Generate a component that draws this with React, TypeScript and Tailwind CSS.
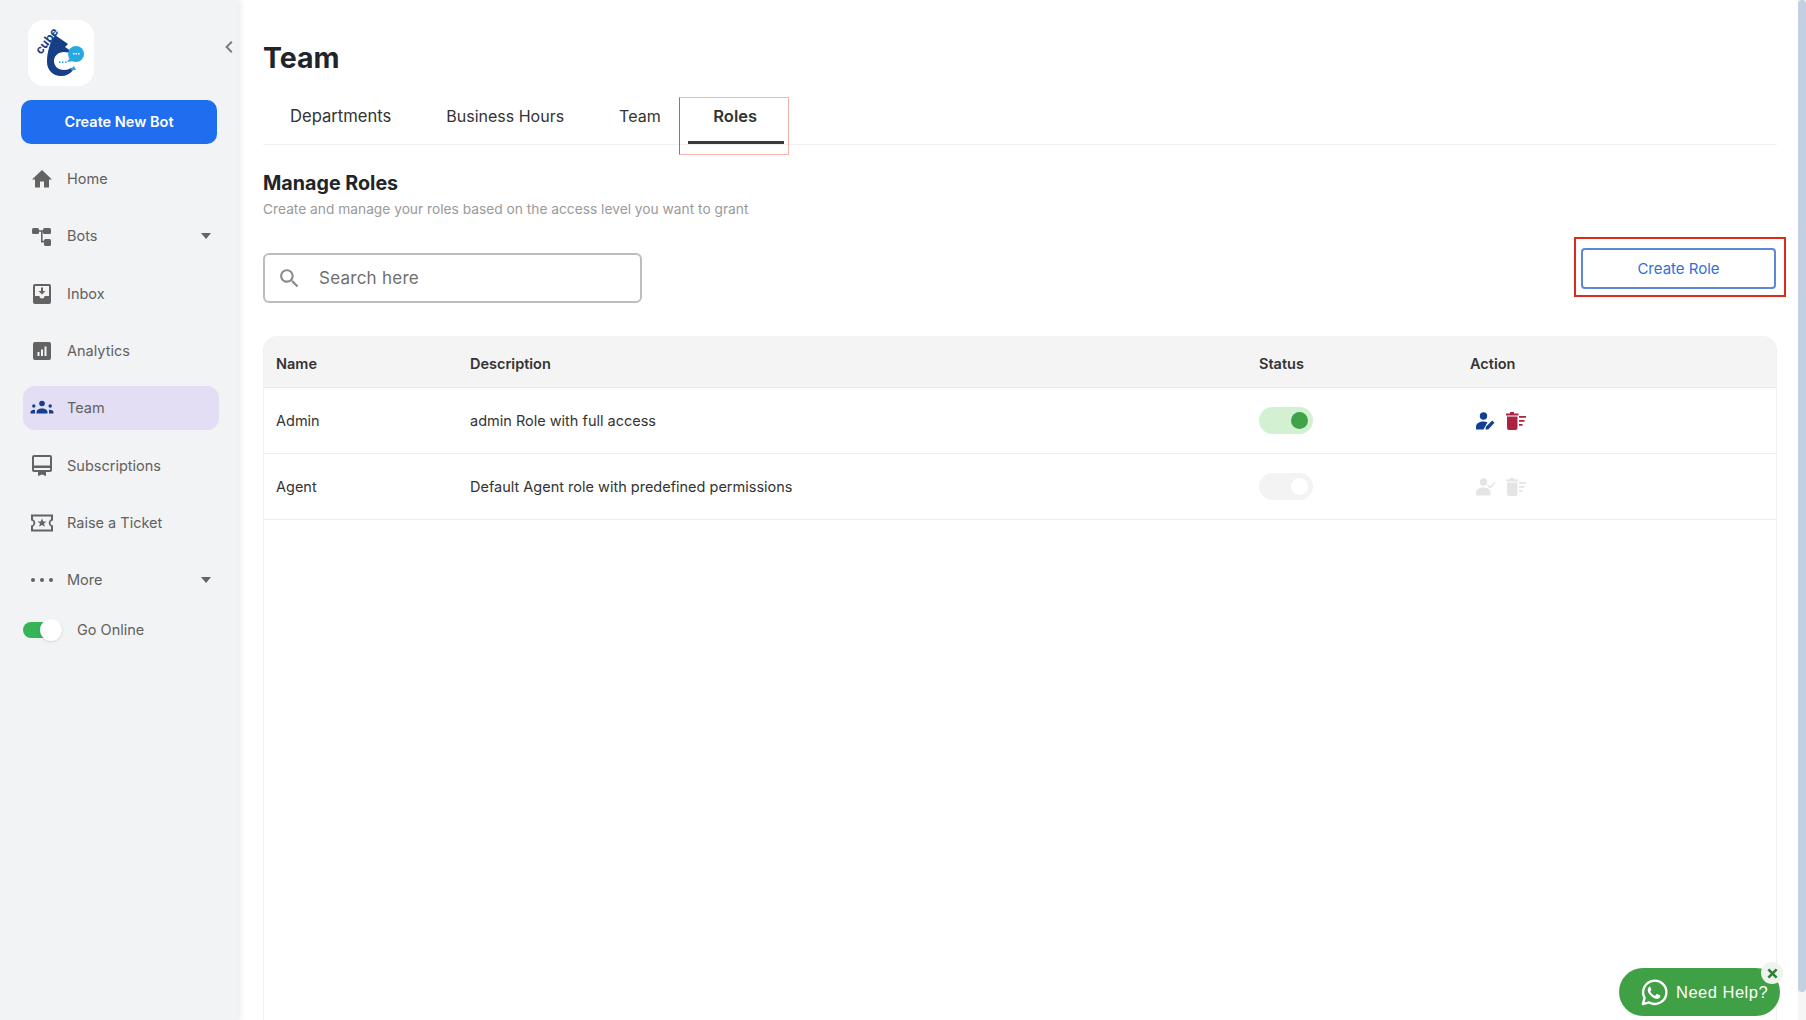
import React from 'react';

const ICON = '#636363';

const HomeIcon = () => (
  <svg viewBox="0 0 24 24" className="w-[24px] h-[24px]" fill={ICON}>
    <path d="M10 20.5v-6h4v6h5v-8h3L12 3 2 12.5h3v8z" />
  </svg>
);
const BotsIcon = () => (
  <svg viewBox="0 0 24 24" className="w-[24px] h-[24px]" fill={ICON} stroke="none">
    <rect x="2" y="4" width="7" height="6" rx="1.5" />
    <rect x="13" y="4" width="8" height="6" rx="1.5" />
    <rect x="14" y="15" width="7" height="7" rx="1.5" />
    <path d="M8 6.2h6v1.6H8zM11 7h1.6v11H11zM11 16.8h4v1.6h-4z" />
  </svg>
);
const InboxIcon = () => (
  <svg viewBox="0 0 24 24" className="w-[24px] h-[24px]">
    <path fill={ICON} d="M5 2h14a2 2 0 0 1 2 2v16a2 2 0 0 1-2 2H5a2 2 0 0 1-2-2V4a2 2 0 0 1 2-2z" />
    <path fill="#f2f3f5" d="M5 4h14v10h-4.500a2.500 2.500 0 0 1-5 0H5z" />
    <path fill={ICON} d="M11 5.500h2v3.500h2.500L12 12.500 8.500 9H11z" />
  </svg>
);
const AnalyticsIcon = () => (
  <svg viewBox="0 0 24 24" className="w-[24px] h-[24px]">
    <rect x="3" y="3" width="18" height="18" rx="2" fill={ICON} />
    <path fill="#f2f3f5" d="M7.500 13h2v4h-2zM11 10.500h2V17h-2zM14.500 7.500h2V17h-2z" />
  </svg>
);
const TeamIcon = () => (
  <svg viewBox="0 0 24 24" className="w-[24px] h-[24px]" fill="#123f8f">
    <circle cx="12" cy="7.500" r="2.800" />
    <path d="M6.500 17.500v-1.300c0-2.300 2.500-3.700 5.500-3.700s5.500 1.400 5.500 3.700v1.300z" />
    <circle cx="3.800" cy="10" r="1.700" />
    <path d="M0.500 17.500v-1c0-1.800 1.500-2.800 3.800-2.800l.7.100v3.700z" />
    <circle cx="20.200" cy="10" r="1.700" />
    <path d="M23.500 17.500v-1c0-1.800-1.500-2.800-3.800-2.800l-.7.100v3.700z" />
  </svg>
);
const SubscriptionIcon = () => (
  <svg viewBox="0 0 24 24" className="w-[24px] h-[24px]" fill={ICON}>
    <path fillRule="evenodd" d="M4 2h16a2 2 0 0 1 2 2v13a2 2 0 0 1-2 2h-4v4l-4-1.500L8 23v-4H4a2 2 0 0 1-2-2V4a2 2 0 0 1 2-2zm0 2v8.500h16V4zm0 11v2h16v-2z" />
  </svg>
);
const TicketIcon = () => (
  <svg viewBox="0 0 24 24" className="w-[24px] h-[24px]" fill={ICON}>
    <path fillRule="evenodd" d="M1 3.500h22v6a2.500 2.500 0 0 0 0 5v6H1v-6a2.500 2.500 0 0 0 0-5zm2 2v2.700a4.300 4.300 0 0 1 0 7.600v2.700h18v-2.700a4.300 4.300 0 0 1 0-7.600V5.500z" />
    <path d="M12 7.500l1.300 3h3.200l-2.500 2.100.9 3.200-2.900-1.800-2.900 1.800.9-3.200-2.500-2.100h3.200z" />
  </svg>
);
const MoreIcon = () => (
  <svg viewBox="0 0 24 24" className="w-[24px] h-[24px]" fill={ICON}>
    <circle cx="3" cy="12" r="2" />
    <circle cx="12" cy="12" r="2" />
    <circle cx="21" cy="12" r="2" />
  </svg>
);

const Caret = () => (
  <svg viewBox="0 0 10 6" className="w-[10px] h-[6px]" fill="#636363">
    <path d="M0 0h10L5 6z" />
  </svg>
);

const UserEdit = ({ color }: { color: string }) => (
  <svg viewBox="0 0 20 18" className="w-[20px] h-[18px]" fill={color}>
    <circle cx="7.500" cy="4" r="3.700" />
    <path d="M0 17.500v-3c0-3 3.500-5 7.500-5 1.500 0 2.800.2 4 .7L7.500 17.500z" />
    <path d="M9.500 17.500l.4-2.700 6.300-6.300 2.300 2.300-6.300 6.700z" />
  </svg>
);
const UserCheck = ({ color }: { color: string }) => (
  <svg viewBox="0 0 20 18" className="w-[20px] h-[18px]" fill={color}>
    <circle cx="7.500" cy="4" r="3.700" />
    <path d="M0 17.500v-3c0-3 3.500-5 7.500-5s7 2 7 5v3z" />
    <path d="M12 6.500l2 2 4.500-4.500 1 1-5.500 5.500-3-3z" />
  </svg>
);
const TrashList = ({ color }: { color: string }) => (
  <svg viewBox="0 0 20 18" className="w-[20px] h-[18px]" fill={color}>
    <path d="M4 0h4v1.500h4.500v2H0v-2h4zM1 4.500h10.500V16a2 2 0 0 1-2 2h-6.500a2 2 0 0 1-2-2z" />
    <path d="M13 4h7v1.800h-7zM13 8h5.500v1.800H13zM13 12h3.500v1.800H13z" />
  </svg>
);

const WhatsApp = () => (
  <svg viewBox="0 0 32 32" className="w-[31px] h-[31px]" fill="none">
    <path d="M4 28l1.800-6.400A12 12 0 1 1 10.500 26.300z" stroke="#fff" strokeWidth="2.400" strokeLinejoin="round" />
    <path fill="#fff" d="M12 9.500c-.5 0-1.300.3-1.900 1-.7.800-1.100 1.800-1.100 3 0 2 1.300 4 3.400 6 2.200 2 4.500 3 6.400 3 1.300 0 2.500-.8 3-1.900.3-.6.300-1.200.2-1.400-.1-.2-2.800-1.500-3.200-1.600-.4-.1-.6 0-.8.300l-1.100 1.300c-.2.200-.4.200-.7.100-1.900-.8-3.500-2.200-4.500-4-.2-.3 0-.5.100-.7l.8-1c.2-.3.200-.5.100-.8l-1.200-2.900c-.1-.3-.4-.4-.5-.4z" />
  </svg>
);

const Logo = () => (
  <svg viewBox="0 0 66 66" className="w-full h-full">
    <path fill="#173f85" d="M27 15C22 22 19 32 19 42c0 8 6 14 14 14 5 0 9-2 12-6l1-17-9-6 3-3z" />
    <path fill="#fff" d="M36 32c6 0 11 3 11 9 0 3 0 5 1 9l-5-2c-2 1-4 2-7 2-6 0-10-4-10-9s4-9 10-9z" />
    <circle cx="48" cy="34" r="8" fill="#29a8e0" />
    <path fill="#29a8e0" d="M42 38l-3 4 7-1zM42 50h6l-2-4z" />
    <path fill="#fff" d="M45 33h1.500v1.500H45zM47.500 33H49v1.500h-1.500zM50 33h1.500v1.500H50z" />
    <path fill="#29a8e0" d="M31 41.500h1.500V43H31zM34 41.500h1.500V43H34zM37 41.500h1.500V43H37z" />
    <text x="13" y="35" fontSize="12" fontWeight="700" fill="#173f85" fontFamily="Inter, sans-serif" transform="rotate(-52 13 35)">cube</text>
  </svg>
);

const navItems = [
  { label: 'Home', icon: <HomeIcon /> },
  { label: 'Bots', icon: <BotsIcon />, caret: true },
  { label: 'Inbox', icon: <InboxIcon /> },
  { label: 'Analytics', icon: <AnalyticsIcon /> },
  { label: 'Team', icon: <TeamIcon />, active: true },
  { label: 'Subscriptions', icon: <SubscriptionIcon /> },
  { label: 'Raise a Ticket', icon: <TicketIcon /> },
  { label: 'More', icon: <MoreIcon />, caret: true },
];

const Toggle = ({ on }: { on: boolean }) => (
  <div className={on ? 'w-[54px] h-[27px] rounded-full bg-[#d3f0d3] flex items-center justify-end pr-[5px]' : 'w-[54px] h-[27px] rounded-full bg-[#f3f3f3] flex items-center justify-end pr-[5px]'}>
    <div className={on ? 'w-[17px] h-[17px] rounded-full bg-[#3fa34a]' : 'w-[17px] h-[17px] rounded-full bg-white'} />
  </div>
);

export default function App() {
  return (
    <div className="flex h-[1020px] w-[1806px] overflow-hidden bg-white font-['Inter',sans-serif]">
      <aside className="relative z-10 w-[238px] shrink-0 bg-[#f2f3f5] shadow-[3px_0_5px_rgba(0,0,0,0.07)] pt-[20px]">
        <div className="ml-[28px] w-[66px] h-[66px] rounded-[16px] bg-white">
          <Logo />
        </div>
        <svg viewBox="0 0 10 16" className="absolute left-[225px] top-[40px] w-[8px] h-[14px]" fill="none" stroke="#7a7a7a" strokeWidth="2.400">
          <path d="M8.500 1.500L2 8l6.500 6.500" />
        </svg>
        <button className="mt-[14px] ml-[21px] w-[196px] h-[44px] rounded-[10px] bg-[#1f6ef0] text-white text-[14.500px] font-semibold">
          Create New Bot
        </button>
        <nav className="mt-[13px] flex flex-col gap-[13.300px] ml-[23px] w-[196px]">
          {navItems.map((item) => (
            <div
              key={item.label}
              className={`flex items-center h-[44px] pl-[7px] pr-[8px] rounded-[12px] ${item.active ? 'bg-[#e3def4]' : ''}`}
            >
              <span className="w-[24px] flex justify-center">{item.icon}</span>
              <span className="ml-[13px] text-[14.500px] text-[#616161] flex-1">{item.label}</span>
              {item.caret && <Caret />}
            </div>
          ))}
        </nav>
        <div className="mt-[17px] ml-[23px] flex items-center">
          <div className="relative w-[39px] h-[16px] rounded-full bg-[#35b558]">
            <div className="absolute right-0 top-[-3px] w-[22px] h-[22px] rounded-full bg-white shadow" />
          </div>
          <span className="ml-[15px] text-[14.500px] text-[#616161]">Go Online</span>
        </div>
      </aside>

      <main className="relative flex-1 pl-[25px] pr-[29px] pt-[37px]">
        <h1 className="text-[28.500px] leading-[42px] font-bold text-[#212529]">Team</h1>
        <div className="h-[66px] flex items-start border-b border-[#f0f0f0] text-[#333]">
          <div className="ml-[27px] mt-[24px] leading-[27px] text-[16.600px]">Departments</div>
          <div className="ml-[55px] mt-[24px] leading-[27px] text-[16px]">Business Hours</div>
          <div className="ml-[55px] mt-[24px] leading-[27px] text-[16px]">Team</div>
          <div className="relative ml-[18px] mt-[18px] w-[110px] h-[58px] border border-[#f5b5ad] border-l-[#e4544a] flex justify-center pl-[3px] text-[16.500px]">
            <span className="font-semibold mt-[5px] leading-[27px]">Roles</span>
            <span className="absolute left-[8px] bottom-[10px] w-[96px] h-[3px] bg-[#3a3a3a]" />
          </div>
        </div>

        <h2 className="mt-[24px] text-[19.700px] leading-[28px] font-bold text-[#212529]">Manage Roles</h2>
        <p className="mt-[2px] text-[13.750px] leading-[20px] text-[#9a9a9a]">
          Create and manage your roles based on the access level you want to grant
        </p>

        <div className="flex items-start justify-between mt-[18px]">
          <div className="mt-[16px] w-[379px] h-[50px] rounded-[6px] border-2 border-[#bdbdbd] flex items-center pl-[12px]">
            <svg viewBox="0 0 24 24" className="w-[25px] h-[25px]" fill="#8a8a8a">
              <path d="M15.5 14h-.79l-.28-.27C15.41 12.59 16 11.11 16 9.5 16 5.91 13.09 3 9.5 3S3 5.91 3 9.500 5.910 16 9.500 16c1.610 0 3.090-.59 4.230-1.570l.27.280v.790l5 4.990L20.490 19l-4.990-5zm-6 0C7.010 14 5 11.990 5 9.500S7.010 5 9.500 5 14 7.010 14 9.500 11.990 14 9.500 14z" />
            </svg>
            <span className="ml-[17px] mt-[2px] text-[17px] text-[#6f6f6f] tracking-[0.25px]">Search here</span>
          </div>
          <div className="border-[2px] border-[#dc2a1c] pt-[9px] pb-[6px] pl-[5px] pr-[8px] -mr-[9px]">
            <button className="block w-[195px] h-[41px] pt-[1px] rounded-[4px] border-2 border-[#5b88d9] text-[#2f6fde] text-[15px]">
              Create Role
            </button>
          </div>
        </div>

        <div className="mt-[33px] rounded-t-[14px] border-x border-[#f0f0f0] h-[700px]">
          <div className="grid grid-cols-[194px_789px_211px_1fr] h-[52px] pt-[5px] items-center bg-[#f4f4f4] rounded-t-[14px] px-[12px] text-[14.500px] font-semibold text-[#333] border-b border-[#ececec]">
            <div>Name</div>
            <div>Description</div>
            <div>Status</div>
            <div>Action</div>
          </div>
          <div className="grid grid-cols-[194px_789px_211px_1fr] h-[66px] items-center px-[12px] text-[14.500px] text-[#333] border-b border-[#ececec]">
            <div>Admin</div>
            <div>admin Role with full access</div>
            <Toggle on />
            <div className="flex items-center gap-[10px] ml-[6px]">
              <UserEdit color="#123f8f" />
              <TrashList color="#ab2340" />
            </div>
          </div>
          <div className="grid grid-cols-[194px_789px_211px_1fr] h-[66px] items-center px-[12px] text-[14.500px] text-[#333] border-b border-[#ececec]">
            <div>Agent</div>
            <div>Default Agent role with predefined permissions</div>
            <Toggle on={false} />
            <div className="flex items-center gap-[10px] ml-[6px]">
              <UserCheck color="#e4e4e4" />
              <TrashList color="#e4e4e4" />
            </div>
          </div>
        </div>

        <div className="absolute right-[26px] bottom-[4px] w-[161px] h-[48px] rounded-full bg-[#3fa045] flex items-center pl-[20px] text-white">
          <WhatsApp />
          <span className="ml-[6px] text-[16.500px] tracking-[0.5px] font-['Liberation_Sans',sans-serif]">Need Help?</span>
          <div className="absolute right-[-3px] top-[-6px] w-[22px] h-[22px] rounded-full bg-[#eef3ee] flex items-center justify-center">
            <svg viewBox="0 0 12 12" className="w-[11px] h-[11px]" stroke="#2f7f3a" strokeWidth="2.800">
              <path d="M1.500 1.500l9 9M10.500 1.500l-9 9" />
            </svg>
          </div>
        </div>

        <div className="absolute right-0 top-0 h-full w-[8px] bg-[#f5f5f5]">
          <div className="w-full h-[992px] rounded-full bg-[#c5cfe4]" />
        </div>
      </main>
    </div>
  );
}
